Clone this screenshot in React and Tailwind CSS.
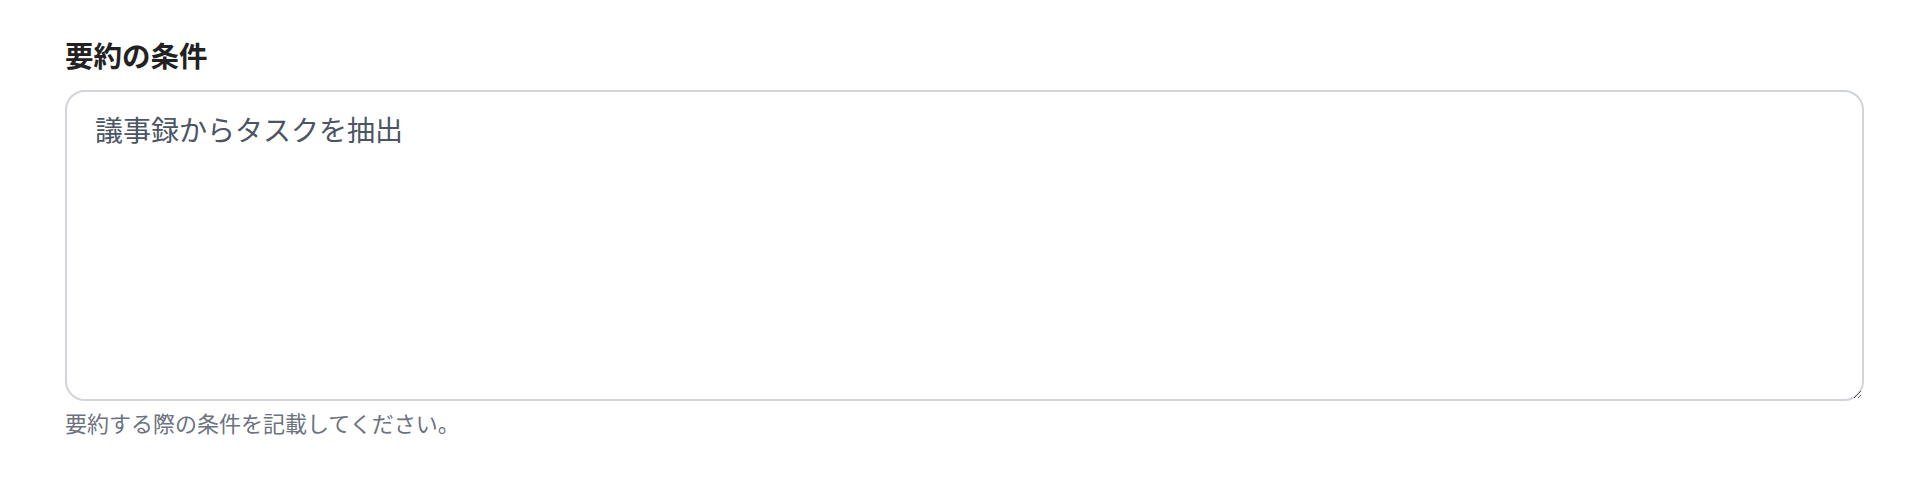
import React from 'react';

const App = () => {
  return (
    <div
      className="w-full min-h-[494px] bg-white pl-[65px] pr-[42px] pt-[36px]"
      style={{ fontFamily: '"Noto Sans", "Noto Sans CJK JP", sans-serif' }}
    >
      {/* Summary condition field */}
      <label htmlFor="summary-condition" className="block text-[28.5px] leading-[40px] font-bold text-[#222222]">
        要約の条件
      </label>
      <textarea
        id="summary-condition"
        defaultValue="議事録からタスクを抽出"
        className="mt-[14px] block w-full h-[311px] rounded-[20px] border-2 border-[#d1d5db] bg-white px-[28px] pt-[17px] pb-[22px] text-[28px] leading-[42px] text-[#4b5563] outline-none"
      />
      <p className="mt-[6px] text-[22px] leading-[32px] text-[#6b7280]">
        要約する際の条件を記載してください。
      </p>
    </div>
  );
};

export default App;
